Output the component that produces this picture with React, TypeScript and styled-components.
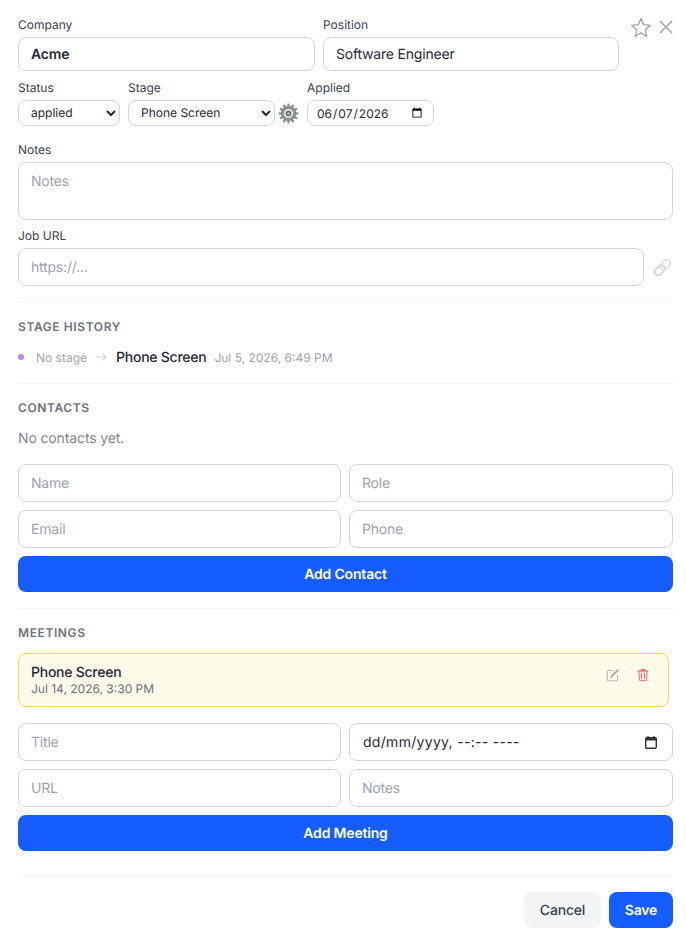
import React from "react";
import styled, { createGlobalStyle } from "styled-components";

const GlobalStyle = createGlobalStyle`
  * { box-sizing: border-box; }
  html, body { margin: 0; padding: 0; background: #fff; }
  body {
    font-family: Inter, "Liberation Sans", sans-serif;
    color: #111827;
    text-rendering: geometricPrecision;
  }
  input, select, textarea, button { font-family: inherit; text-rendering: geometricPrecision; }
  ::placeholder { color: #9ca3af; opacity: 1; }
`;

const Page = styled.div`
  width: 686px;
  height: 944px;
  overflow: hidden;
  padding: 18px 13px 0 18px;
  display: flex;
  flex-direction: column;
`;

const TopRow = styled.div`
  display: flex;
  gap: 8px;
`;

const Field = styled.label<{ $width?: number }>`
  display: flex;
  flex-direction: column;
  min-width: 0;
  ${(p) => (p.$width ? `width: ${p.$width}px; flex: none;` : "")}
`;

const Label = styled.span`
  font-size: 12px;
  line-height: 13px;
  font-weight: 400;
  color: #374151;
  margin-bottom: 6px;
`;

const controlBase = `
  width: 100%;
  border: 1px solid #d1d5db;
  background: #fff;
  outline: none;
  color: #1f2937;
`;

const Input = styled.input<{ $bold?: boolean; $large?: boolean }>`
  ${controlBase}
  height: ${(p) => (p.$large ? 34 : 38)}px;
  border-radius: 8px;
  padding: 0 12px;
  font-size: 14px;
  letter-spacing: -0.2px;
  font-weight: ${(p) => (p.$bold ? 600 : 400)};
`;

const TextArea = styled.textarea`
  ${controlBase}
  display: block;
  height: 58px;
  border-radius: 8px;
  padding: 9px 12px;
  font-size: 14px;
  letter-spacing: -0.2px;
  line-height: 20px;
  resize: none;
`;

const Select = styled.select`
  ${controlBase}
  height: 26px;
  border-radius: 8px;
  padding: 0 8px 2px;
  font-size: 12px;
`;

const SmallDate = styled.input`
  ${controlBase}
  height: 26px;
  border-radius: 8px;
  padding: 0 8px;
  font-size: 12px;
`;

const DateField = styled.div`
  ${controlBase}
  height: 38px;
  border-radius: 8px;
  padding: 0 15px 0 13px;
  display: flex;
  align-items: center;
  justify-content: space-between;
  font-size: 14px;
  letter-spacing: 0.3px;
`;

const HeaderActions = styled.div`
  flex: none;
  width: 46px;
  margin-left: 3px;
  display: flex;
  align-items: flex-start;
  gap: 7px;
`;

const IconButton = styled.button`
  border: 0;
  background: none;
  padding: 0;
  display: flex;
  line-height: 0;
`;

const StarButton = styled(IconButton)`
  margin-top: -1px;
`;

const CloseButton = styled(IconButton)`
  margin-top: 2px;
`;

const StageRow = styled.div`
  display: flex;
  align-items: flex-end;
  margin-top: 10px;
`;

const StageField = styled(Field)`
  margin-left: 8px;
`;

const Gear = styled.span`
  flex: none;
  display: flex;
  width: 32px;
  height: 26px;
  align-items: center;
  padding-left: 3px;
`;

const Block = styled.div<{ $top: number }>`
  margin-top: ${(p) => p.$top}px;
`;

const UrlRow = styled.div`
  display: flex;
  align-items: center;
  gap: 8px;
`;

const Section = styled.section<{ $top: number }>`
  margin-top: ${(p) => p.$top}px;
`;

const Divider = styled.hr`
  border: 0;
  border-top: 1px solid #f3f4f6;
  margin: 0;
`;

const SectionTitle = styled.h3`
  margin: 17px 0 0;
  font-size: 12px;
  line-height: 14px;
  font-weight: 600;
  letter-spacing: 0.6px;
  color: #6b7280;
  text-transform: uppercase;
`;

const History = styled.div`
  display: flex;
  align-items: center;
  height: 20px;
  margin-top: 13px;
  font-size: 12px;
`;

const Dot = styled.span`
  width: 6px;
  height: 6px;
  border-radius: 50%;
  background: #c084fc;
  margin-right: 12px;
`;

const Muted = styled.span`
  color: #9ca3af;
`;

const ArrowMark = styled.span`
  display: flex;
  margin: 0 9px;
`;

const StageName = styled.span`
  font-size: 14px;
  font-weight: 500;
  letter-spacing: -0.25px;
  color: #1f2937;
  margin-right: 8px;
`;

const Empty = styled.p`
  margin: 15px 0 0;
  font-size: 14px;
  line-height: 17px;
  letter-spacing: -0.13px;
  color: #6b7280;
  opacity: 0.85;
`;

const InputGrid = styled.div<{ $top: number }>`
  display: grid;
  grid-template-columns: 323px 1fr;
  gap: 8px;
  margin-top: ${(p) => p.$top}px;
`;

const PrimaryWide = styled.button`
  display: block;
  width: 100%;
  height: 36px;
  margin-top: 8px;
  border: 0;
  border-radius: 8px;
  background: #155dfc;
  color: #fff;
  font-size: 14px;
  font-weight: 600;
  letter-spacing: -0.18px;
`;

const MeetingCard = styled.div`
  width: 651px;
  height: 54px;
  margin-top: 13px;
  padding: 10px 12px;
  display: flex;
  justify-content: space-between;
  border: 1px solid #fcd34d;
  border-radius: 8px;
  background: #fffbeb;
`;

const MeetingTitle = styled.div`
  font-size: 14px;
  line-height: 17px;
  font-weight: 500;
  letter-spacing: -0.25px;
  color: #1f2937;
`;

const MeetingDate = styled.div`
  font-size: 12px;
  line-height: 16px;
  color: #6b7280;
`;

const CardActions = styled.div`
  display: flex;
  gap: 16px;
  padding: 4px 6px 0 0;
`;

const Footer = styled.div`
  display: flex;
  justify-content: flex-end;
  gap: 8px;
  padding-top: 16px;
`;

const FooterButton = styled.button<{ $primary?: boolean }>`
  height: 36px;
  border: 0;
  border-radius: 8px;
  font-size: 14px;
  letter-spacing: -0.18px;
  width: ${(p) => (p.$primary ? 64 : 77)}px;
  font-weight: ${(p) => (p.$primary ? 600 : 500)};
  background: ${(p) => (p.$primary ? "#155dfc" : "#f3f4f6")};
  color: ${(p) => (p.$primary ? "#fff" : "#374151")};
`;

const StarIcon = () => (
  <svg width="22" height="22" viewBox="0 0 22 22" fill="#fff" stroke="#9ca3af" strokeWidth="1.3" strokeLinejoin="round">
    <path d="M11 1.6l2.7 6.1 6.6.7-5 4.4 1.4 6.5L11 15.9l-5.7 3.4 1.4-6.5-5-4.4 6.6-.7z" />
  </svg>
);

const CloseIcon = () => (
  <svg width="14" height="14" viewBox="0 0 14 14" fill="none" stroke="#9ca3af" strokeWidth="1.5">
    <path d="M1 1l12 12M13 1L1 13" />
  </svg>
);

const GearIcon = () => {
  const teeth = Array.from({ length: 12 }, (_, i) => i * 30);
  return (
    <svg width="21" height="21" viewBox="0 0 20 20">
      <defs>
        <radialGradient id="gearBody" cx="50%" cy="50%" r="50%">
          <stop offset="40%" stopColor="#a8acb0" />
          <stop offset="100%" stopColor="#7c8085" />
        </radialGradient>
      </defs>
      {teeth.map((a) => (
        <rect key={a} x="8.9" y="0.6" width="2.2" height="4" fill="#8d9196" transform={`rotate(${a} 10 10)`} />
      ))}
      <circle cx="10" cy="10" r="7.2" fill="url(#gearBody)" />
      <circle cx="10" cy="10" r="4.4" fill="#dfe2e4" />
      <circle cx="10" cy="10" r="2.6" fill="#5f6369" />
      <circle cx="10" cy="10" r="1.2" fill="#b4c6d8" />
    </svg>
  );
};

const LinkIcon = () => (
  <svg width="21" height="21" viewBox="0 0 22 22" fill="none">
    <g transform="rotate(-45 11 11)">
      <rect x="0.8" y="7.4" width="12" height="7.2" rx="3.6" stroke="#d4d6d9" strokeWidth="2" />
      <rect x="9.2" y="7.4" width="12" height="7.2" rx="3.6" stroke="#dfe1e3" strokeWidth="2" />
    </g>
  </svg>
);

const ArrowIcon = () => (
  <svg width="11" height="10" viewBox="0 0 11 10" fill="none" stroke="#d1d5db" strokeWidth="1.1">
    <path d="M0 5h10M6.5 1.5L10 5 6.5 8.5" />
  </svg>
);

const CalendarIcon = () => (
  <svg width="12" height="13" viewBox="0 0 12 13" fill="none">
    <path d="M3 0v2M9 0v2" stroke="#333" strokeWidth="1.2" />
    <rect x="0.7" y="1.7" width="10.6" height="10.6" rx="1.2" stroke="#333" strokeWidth="1.4" />
    <rect x="0.7" y="1.7" width="10.6" height="2.8" fill="#333" />
  </svg>
);

const EditIcon = () => (
  <svg width="14" height="14" viewBox="0 0 14 14" fill="none">
    <path d="M7 2.5H2.2a1 1 0 0 0-1 1v8.3a1 1 0 0 0 1 1h8.3a1 1 0 0 0 1-1V7" stroke="#b4b6b8" strokeWidth="1.1" />
    <path d="M5.2 8.8l7.2-7.2" stroke="#a3a6a9" strokeWidth="2" />
    <path d="M5.4 8.6l-.6 1 1-.4z" stroke="#8f9295" strokeWidth="0.8" />
  </svg>
);

const TrashIcon = () => (
  <svg width="14" height="14" viewBox="0 0 14 14" fill="#fee2e2" stroke="#f87171" strokeWidth="1">
    <path d="M1.5 3h11M5 3V1.5h4V3M2.8 3l.8 9.6h6.8l.8-9.6z" />
    <path d="M5.5 5v5.5M8.5 5v5.5" />
  </svg>
);

const App = () => (
  <Page>
    <GlobalStyle />
    <TopRow>
      <Field $width={297}>
        <Label>Company</Label>
        <Input $bold $large defaultValue="Acme" />
      </Field>
      <Field $width={296}>
        <Label>Position</Label>
        <Input $large defaultValue="Software Engineer" />
      </Field>
      <HeaderActions>
        <StarButton aria-label="Favourite"><StarIcon /></StarButton>
        <CloseButton aria-label="Close"><CloseIcon /></CloseButton>
      </HeaderActions>
    </TopRow>

    <StageRow>
      <Field $width={102}>
        <Label>Status</Label>
        <Select defaultValue="applied">
          <option>applied</option>
          <option>interview</option>
          <option>offer</option>
        </Select>
      </Field>
      <StageField $width={147}>
        <Label>Stage</Label>
        <Select defaultValue="Phone Screen">
          <option>Phone Screen</option>
          <option>Onsite</option>
        </Select>
      </StageField>
      <Gear><GearIcon /></Gear>
      <Field $width={127}>
        <Label>Applied</Label>
        <SmallDate type="date" defaultValue="2026-06-07" />
      </Field>
    </StageRow>

    <Block $top={17}>
      <Field>
        <Label>Notes</Label>
        <TextArea placeholder="Notes" />
      </Field>
    </Block>

    <Block $top={9}>
      <Field>
        <Label>Job URL</Label>
        <UrlRow>
          <Input placeholder="https://..." />
          <IconButton aria-label="Open link"><LinkIcon /></IconButton>
        </UrlRow>
      </Field>
    </Block>

    <Section $top={16}>
      <Divider />
      <SectionTitle>Stage History</SectionTitle>
      <History>
        <Dot />
        <Muted>No stage</Muted>
        <ArrowMark><ArrowIcon /></ArrowMark>
        <StageName>Phone Screen</StageName>
        <Muted>Jul 5, 2026, 6:49 PM</Muted>
      </History>
    </Section>

    <Section $top={16}>
      <Divider />
      <SectionTitle>Contacts</SectionTitle>
      <Empty>No contacts yet.</Empty>
      <InputGrid $top={17}>
        <Input placeholder="Name" />
        <Input placeholder="Role" />
        <Input placeholder="Email" />
        <Input placeholder="Phone" />
      </InputGrid>
      <PrimaryWide>Add Contact</PrimaryWide>
    </Section>

    <Section $top={16}>
      <Divider />
      <SectionTitle>Meetings</SectionTitle>
      <MeetingCard>
        <div>
          <MeetingTitle>Phone Screen</MeetingTitle>
          <MeetingDate>Jul 14, 2026, 3:30 PM</MeetingDate>
        </div>
        <CardActions>
          <IconButton aria-label="Edit"><EditIcon /></IconButton>
          <IconButton aria-label="Delete"><TrashIcon /></IconButton>
        </CardActions>
      </MeetingCard>
      <InputGrid $top={16}>
        <Input placeholder="Title" />
        <DateField>
          <span>dd/mm/yyyy, --:-- ----</span>
          <CalendarIcon />
        </DateField>
        <Input placeholder="URL" />
        <Input placeholder="Notes" />
      </InputGrid>
      <PrimaryWide>Add Meeting</PrimaryWide>
    </Section>

    <Section $top={24}>
      <Divider />
      <Footer>
        <FooterButton>Cancel</FooterButton>
        <FooterButton $primary>Save</FooterButton>
      </Footer>
    </Section>
  </Page>
);

export default App;
